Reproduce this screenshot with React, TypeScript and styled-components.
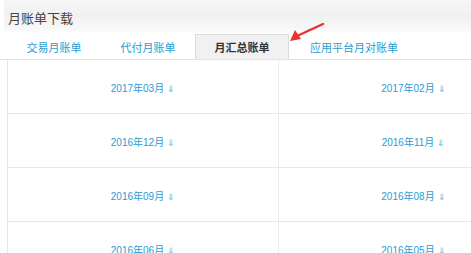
import styled, { createGlobalStyle } from 'styled-components';

const GlobalStyle = createGlobalStyle`
  html, body {
    margin: 0;
    padding: 0;
    background: #fff;
    overflow: hidden;
  }
  body {
    font-family: "Liberation Sans", "Noto Sans CJK SC", sans-serif;
  }
`;

const tabs = ['交易月账单', '代付月账单', '月汇总账单', '应用平台月对账单'];
const activeTab = 2;

const rows = [
  ['2017年03月', '2017年02月'],
  ['2016年12月', '2016年11月'],
  ['2016年09月', '2016年08月'],
  ['2016年06月', '2016年05月'],
];

export default function App() {
  return (
    <Page>
      <GlobalStyle />
      <Header>月账单下载</Header>
      <TabBar>
        {tabs.map((t, i) => (
          <Tab key={t} $active={i === activeTab} $wide={i === 3}>
            {t}
          </Tab>
        ))}
        <Pointer width="42" height="26" viewBox="0 0 42 26">
          <path d="M38 4 L12 16" stroke="#e8332f" strokeWidth="2.4" strokeLinecap="round" />
          <path d="M5 21 L10 10 L16 19 Z" fill="#e8332f" />
        </Pointer>
      </TabBar>
      <Table>
        {rows.map((r) => (
          <Row key={r[0]}>
            {r.map((d) => (
              <Cell key={d}>
                <DateLink>
                  {d}
                  <Down>⇓</Down>
                </DateLink>
              </Cell>
            ))}
          </Row>
        ))}
      </Table>
    </Page>
  );
}

const Page = styled.div`
  width: 471px;
  height: 253px;
  overflow: hidden;
`;

const Header = styled.div`
  height: 33px;
  display: flex;
  align-items: center;
  padding: 2px 0 0 4px;
  box-sizing: border-box;
  margin-left: 4px;
  font-size: 13px;
  color: #444;
  background: linear-gradient(#f6f6f6 0%, #f1f1f1 45%, #f7f7f7 85%, #fdfdfd 100%);
`;

const TabBar = styled.div`
  position: relative;
  display: flex;
  height: 26px;
  padding-left: 7px;
  border-bottom: 1px solid #e3e3e3;
`;

const Tab = styled.div<{ $active: boolean; $wide: boolean }>`
  width: ${(p) => (p.$wide ? 'auto' : '94px')};
  padding: ${(p) => (p.$wide ? '0 20px' : '0')};
  margin-top: 1px;
  display: flex;
  align-items: center;
  justify-content: center;
  box-sizing: border-box;
  font-size: 11px;
  color: ${(p) => (p.$active ? '#333' : '#2b9bd1')};
  font-weight: ${(p) => (p.$active ? 'bold' : 'normal')};
  background: ${(p) => (p.$active ? '#f1f1f1' : 'transparent')};
  border: 1px solid ${(p) => (p.$active ? '#dcdcdc' : 'transparent')};
  border-bottom: none;
`;

const Pointer = styled.svg`
  position: absolute;
  left: 285px;
  top: -13px;
`;

const Table = styled.div`
  margin-left: 7px;
  width: 540px;
  border-left: 1px solid #e6e6e6;
`;

const Row = styled.div`
  display: grid;
  grid-template-columns: 270px 270px;
  height: 53px;
  border-bottom: 1px solid #e8e8e8;
`;

const Cell = styled.div`
  display: flex;
  align-items: center;
  justify-content: center;
  & + & {
    border-left: 1px solid #ececec;
  }
`;

const DateLink = styled.span`
  font-size: 10px;
  color: #2b9bd1;
  padding-top: 1px;
`;

const Down = styled.span`
  margin-left: 3px;
  font-size: 9px;
  color: #6fb0d8;
`;
